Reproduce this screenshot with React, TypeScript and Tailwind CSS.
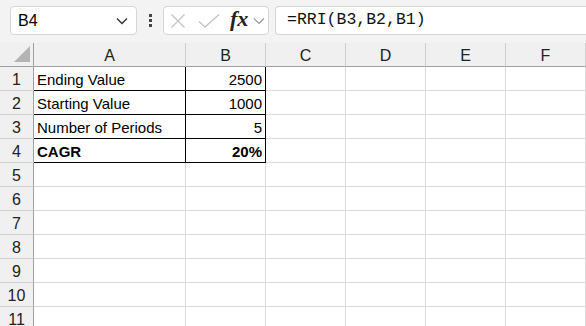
import React from 'react';

const cols = ['A', 'B', 'C', 'D', 'E', 'F'];

type Cell = { a?: string; b?: string; bold?: boolean };

const data: Cell[] = [
  { a: 'Ending Value', b: '2500' },
  { a: 'Starting Value', b: '1000' },
  { a: 'Number of Periods', b: '5' },
  { a: 'CAGR', b: '20%', bold: true },
];

const rows = Array.from({ length: 11 }, (_, i) => i + 1);

export default function App() {
  return (
    <div
      className="w-[586px] h-[326px] overflow-hidden bg-white text-black"
      style={{ fontFamily: '"Liberation Sans", Arial, sans-serif' }}
    >
      {/* formula bar */}
      <div className="h-[43px] bg-[#f3f3f3] flex items-start pt-[6px] pl-[10px]">
        <div className="w-[127px] h-[29px] bg-white border border-[#d6d6d6] rounded-[4px] flex items-center justify-between pl-[7px] pr-[8px]">
          <span className="text-[16px]">B4</span>
          <svg width="12" height="8" viewBox="0 0 12 8" fill="none">
            <path d="M1 1.5 L6 6.5 L11 1.5" stroke="#333" strokeWidth="1.4" />
          </svg>
        </div>
        <div className="w-[26px] h-[29px] flex flex-col items-center justify-center gap-[2px]">
          <span className="w-[3px] h-[3px] bg-[#444]" />
          <span className="w-[3px] h-[3px] bg-[#444]" />
          <span className="w-[3px] h-[3px] bg-[#444]" />
        </div>
        <div className="w-[106px] h-[29px] bg-white border border-[#d6d6d6] rounded-[4px] flex items-center pl-[6px]">
          <svg width="16" height="14" viewBox="0 0 16 14" fill="none">
            <path d="M1.5 0.5 L14.5 13.5 M14.5 0.5 L1.5 13.5" stroke="#c4c4c4" strokeWidth="1.3" />
          </svg>
          <svg width="22" height="14" viewBox="0 0 22 14" fill="none" className="ml-[12px]">
            <path d="M1 7.5 L7 13 L21 0.5" stroke="#c4c4c4" strokeWidth="1.3" />
          </svg>
          <span
            className="ml-[10px] text-[22px] italic font-semibold leading-none -mt-[3px] text-[#222]"
            style={{ fontFamily: '"Liberation Serif", "Times New Roman", serif' }}
          >
            fx
          </span>
          <svg width="12" height="8" viewBox="0 0 12 8" fill="none" className="ml-[5px]">
            <path d="M1 1.5 L6 6.5 L11 1.5" stroke="#999" strokeWidth="1.2" />
          </svg>
        </div>
        <div className="ml-[6px] flex-1 h-[29px] bg-white border border-r-0 border-[#d6d6d6] rounded-l-[4px] flex items-center pl-[11px]">
          <span
            className="text-[16.5px] text-[#111]"
            style={{ fontFamily: '"Liberation Mono", "Courier New", monospace' }}
          >
            =RRI(B3,B2,B1)
          </span>
        </div>
      </div>

      {/* grid */}
      <div className="grid grid-cols-[34px_152px_80px_80px_80px_80px_80px] auto-rows-[24px] text-[15px]">
        {/* header row */}
        <div className="relative bg-[#f0f0f0] border-r border-b border-[#a0a0a0]">
          <svg width="16" height="16" viewBox="0 0 16 16" className="absolute right-[3px] bottom-[4px]">
            <path d="M16 0 L16 16 L0 16 Z" fill="#b4b4b4" />
          </svg>
        </div>
        {cols.map((c) => (
          <div
            key={c}
            className="bg-[#f0f0f0] border-r border-r-[#d0d0d0] border-b border-b-[#a0a0a0] flex items-center justify-center pt-[3px] text-[16px] text-[#222]"
          >
            {c}
          </div>
        ))}

        {rows.map((r) => {
          const d = data[r - 1];
          const boxed = !!d;
          return (
            <React.Fragment key={r}>
              <div className="bg-[#f0f0f0] border-r border-r-[#a0a0a0] border-b border-b-[#d0d0d0] flex items-center justify-center pt-[3px] text-[16px] text-[#222]">
                {r}
              </div>
              <div
                className={
                  boxed
                    ? 'border-r border-b border-black pl-[3px] pt-[3px] leading-[20px] whitespace-nowrap' +
                      (d.bold ? ' font-bold' : '')
                    : 'border-r border-b border-[#dadada]'
                }
              >
                {d?.a}
              </div>
              <div
                className={
                  boxed
                    ? 'border-r border-b border-black pr-[3px] pt-[3px] leading-[20px] text-right' +
                      (d.bold ? ' font-bold' : '')
                    : 'border-r border-b border-[#dadada]'
                }
              >
                {d?.b}
              </div>
              <div className="border-r border-b border-[#dadada]" />
              <div className="border-r border-b border-[#dadada]" />
              <div className="border-r border-b border-[#dadada]" />
              <div className="border-r border-b border-[#dadada]" />
            </React.Fragment>
          );
        })}
      </div>
    </div>
  );
}
